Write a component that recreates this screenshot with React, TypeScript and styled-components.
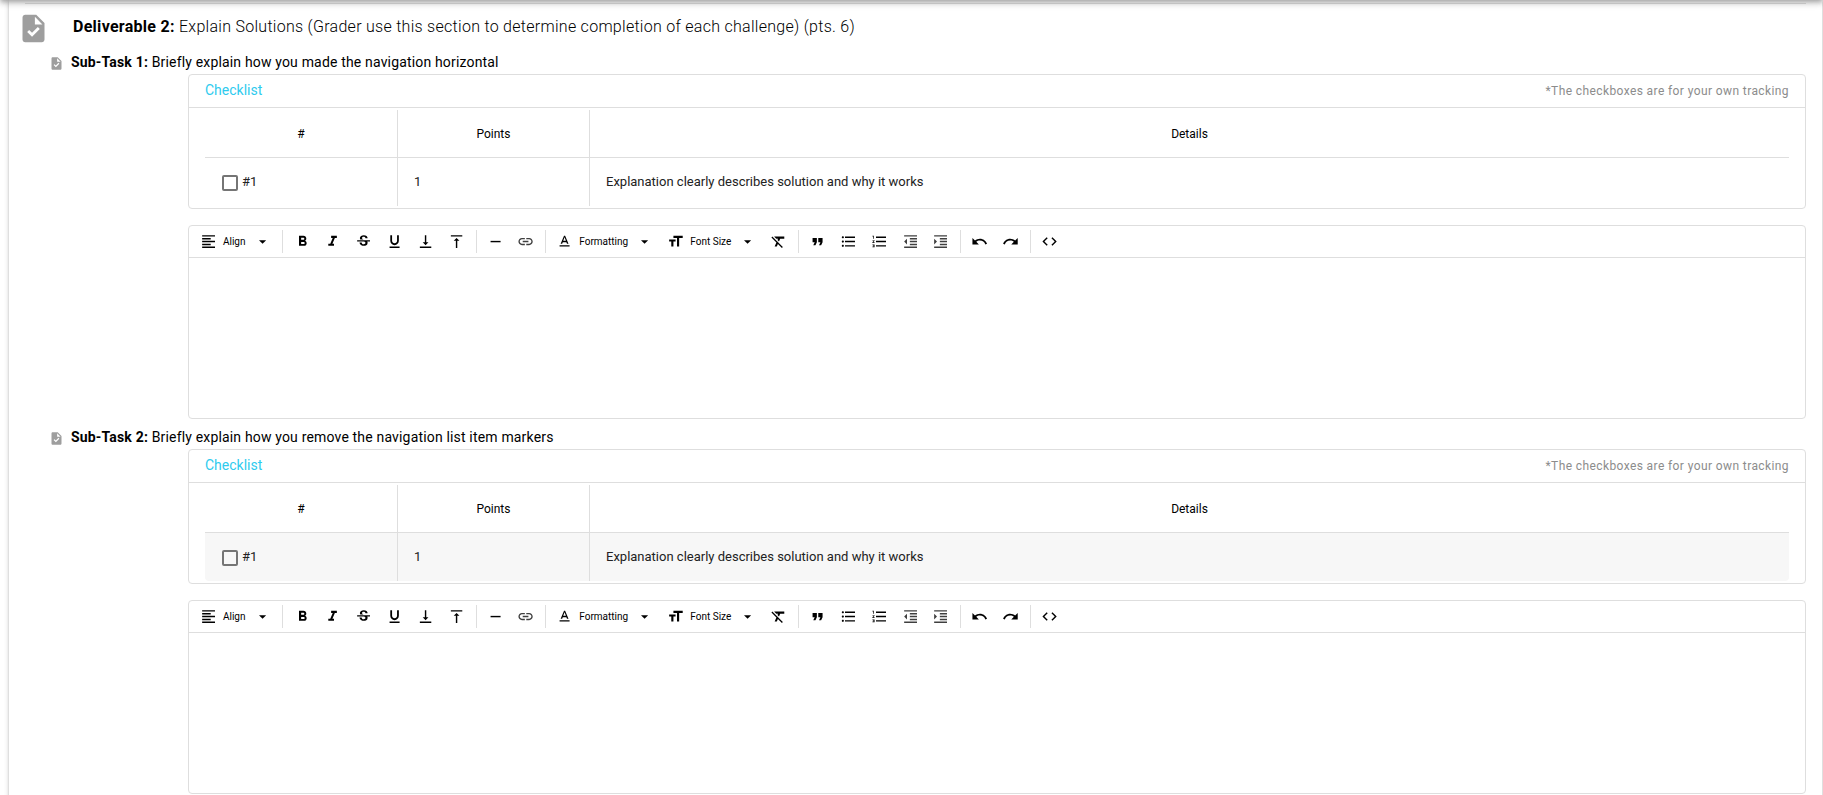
import React from 'react';
import styled, { createGlobalStyle } from 'styled-components';
import type { IconType } from 'react-icons';
import {
  MdTask, MdFormatAlignLeft, MdArrowDropDown, MdFormatBold, MdFormatItalic, MdStrikethroughS,
  MdFormatUnderlined, MdVerticalAlignBottom, MdVerticalAlignTop, MdRemove, MdLink, MdTextFormat,
  MdFormatSize, MdFormatClear, MdFormatQuote, MdFormatListBulleted, MdFormatListNumbered,
  MdFormatIndentDecrease, MdFormatIndentIncrease, MdUndo, MdRedo, MdCode,
} from 'react-icons/md';

const line = '#dedede';

const GlobalStyle = createGlobalStyle`
  *, *::before, *::after { box-sizing: border-box; }
  html, body { margin: 0; height: 100%; overflow: hidden; }
  body {
    background: #fff;
    color: #000;
    font-family: Roboto, "Liberation Sans", sans-serif;
    font-size: 14px;
    line-height: 1.5;
  }
`;

const Page = styled.div`
  position: relative;
  height: 795px;
  padding: 0 1px 0 9px;
  overflow: hidden;
`;

const AppBarShadow = styled.div`
  position: absolute;
  left: 0;
  right: 0;
  top: -50px;
  height: 50px;
  box-shadow: 0 2px 4px -1px rgba(0, 0, 0, 0.2), 0 4px 5px rgba(0, 0, 0, 0.14), 0 1px 10px rgba(0, 0, 0, 0.12);
`;

const Sheet = styled.main`
  height: 860px;
  padding: 3px 16px 0;
  box-shadow: 0 1px 5px rgba(0, 0, 0, 0.2), 0 2px 2px rgba(0, 0, 0, 0.14), 0 3px 1px -2px rgba(0, 0, 0, 0.12);
`;

const Divider = styled.hr`
  height: 1px;
  margin: 0;
  border: 0;
  background: rgba(0, 0, 0, 0.12);
`;

const Deliverable = styled.header`
  display: flex;
  align-items: center;
  height: 46px;
  margin-left: -8px;
`;

const DeliverableIcon = styled(MdTask)`
  width: 33px;
  height: 33px;
  margin-top: 2px;
  color: #9e9e9e;
`;

const DeliverableTitle = styled.h1`
  margin: 0 0 0 23px;
  padding-bottom: 1px;
  font-size: 16px;
  font-weight: 300;
  letter-spacing: 0.28px;
  line-height: 24px;
  b { font-weight: 700; }
`;

const SubTask = styled.section`
  height: 375px;
`;

const SubTaskHead = styled.div`
  display: flex;
  align-items: center;
  height: 24px;
  padding-left: 23.5px;
`;

const SubTaskIcon = styled(MdTask)`
  width: 15px;
  height: 15px;
  margin-top: 2px;
  color: #9e9e9e;
`;

const SubTaskTitle = styled.h2`
  margin: 0 0 0 7.5px;
  font-size: 14px;
  font-weight: 400;
  letter-spacing: 0.17px;
  line-height: 20px;
`;

const Bordered = styled.div`
  margin-left: 163px;
  border: 1px solid ${line};
  border-radius: 4px;
`;

const Checklist = styled(Bordered)`
  height: 135px;
`;

const ChecklistHead = styled.div`
  display: flex;
  justify-content: space-between;
  align-items: center;
  height: 33px;
  padding: 0 16px 2px;
  border-bottom: 1px solid ${line};
`;

const ChecklistTitle = styled.span`
  color: #2fcbee;
  font-size: 14px;
`;

const Note = styled.span`
  padding-top: 2px;
  color: #8c8c8c;
  font-size: 12px;
  letter-spacing: 0.4px;
`;

const Grid = styled.div`
  padding: 2px 16px;
`;

const Row = styled.div<{ $hovered?: boolean }>`
  display: grid;
  grid-template-columns: 192px 192px 1fr;
  height: 48px;
  border-radius: 0 0 4px 4px;
  background: ${(p) => (p.$hovered ? '#f7f7f7' : 'transparent')};
`;

const HeadRow = styled(Row)`
  border-bottom: 1px solid ${line};
  border-radius: 0;
`;

const Cell = styled.div`
  display: flex;
  align-items: center;
  padding: 0 16px 1px;
  color: #222;
  font-size: 13px;
  & + & { border-left: 1px solid ${line}; }
`;

const HeadCell = styled(Cell)`
  justify-content: center;
  padding-bottom: 0;
  color: #000;
  font-size: 12px;
`;

const Checkbox = styled.span`
  width: 16px;
  height: 16px;
  margin: 3px 4px 0 1px;
  border: 2px solid #757575;
  border-radius: 2px;
`;

const Editor = styled(Bordered)`
  height: 194px;
  margin-top: 16px;
`;

const Toolbar = styled.div`
  display: flex;
  height: 32px;
  padding: 4px 0;
  border-bottom: 1px solid ${line};
`;

const Group = styled.div`
  position: relative;
  display: flex;
  padding: 0 4px;
  & + &::before {
    content: '';
    position: absolute;
    left: 0;
    top: 0;
    width: 1px;
    height: 23px;
    background: ${line};
  }
  &:nth-child(2) { padding-left: 5px; }
`;

const ToolButton = styled.button`
  display: flex;
  align-items: center;
  height: 23px;
  margin: 0 4px;
  padding: 0 2.85px;
  border: 0;
  background: none;
  color: #000;
  font-family: inherit;
  font-size: 10px;
  svg { width: 17.15px; height: 17.15px; flex: none; }
`;

const ToolLabel = styled.span`
  margin: 0 8.2px 0 6px;
  white-space: nowrap;
`;

type Tool = { icon: IconType; name: string; label?: string };

const groups: Tool[][] = [
  [{ icon: MdFormatAlignLeft, name: 'align', label: 'Align' }],
  [
    { icon: MdFormatBold, name: 'bold' },
    { icon: MdFormatItalic, name: 'italic' },
    { icon: MdStrikethroughS, name: 'strike' },
    { icon: MdFormatUnderlined, name: 'underline' },
    { icon: MdVerticalAlignBottom, name: 'subscript' },
    { icon: MdVerticalAlignTop, name: 'superscript' },
  ],
  [{ icon: MdRemove, name: 'hr' }, { icon: MdLink, name: 'link' }],
  [
    { icon: MdTextFormat, name: 'formatting', label: 'Formatting' },
    { icon: MdFormatSize, name: 'size', label: 'Font Size' },
    { icon: MdFormatClear, name: 'clear' },
  ],
  [
    { icon: MdFormatQuote, name: 'quote' },
    { icon: MdFormatListBulleted, name: 'bullets' },
    { icon: MdFormatListNumbered, name: 'numbers' },
    { icon: MdFormatIndentDecrease, name: 'outdent' },
    { icon: MdFormatIndentIncrease, name: 'indent' },
  ],
  [{ icon: MdUndo, name: 'undo' }, { icon: MdRedo, name: 'redo' }],
  [{ icon: MdCode, name: 'source' }],
];

const softIcons = ['link', 'outdent', 'indent'];

function EditorToolbar() {
  return (
    <Toolbar>
      {groups.map((tools, i) => (
        <Group key={i}>
          {tools.map(({ icon: Icon, name, label }) => (
            <ToolButton key={name} type="button">
              <Icon opacity={softIcons.includes(name) ? 0.75 : 1} />
              {label && <ToolLabel>{label}</ToolLabel>}
              {label && <MdArrowDropDown />}
            </ToolButton>
          ))}
        </Group>
      ))}
    </Toolbar>
  );
}

function SubTaskSection({ number, text, hovered }: { number: number; text: string; hovered?: boolean }) {
  return (
    <SubTask>
      <SubTaskHead>
        <SubTaskIcon />
        <SubTaskTitle><b>Sub-Task {number}:</b> {text}</SubTaskTitle>
      </SubTaskHead>
      <Checklist>
        <ChecklistHead>
          <ChecklistTitle>Checklist</ChecklistTitle>
          <Note>*The checkboxes are for your own tracking</Note>
        </ChecklistHead>
        <Grid>
          <HeadRow>
            <HeadCell>#</HeadCell>
            <HeadCell>Points</HeadCell>
            <HeadCell>Details</HeadCell>
          </HeadRow>
          <Row $hovered={hovered}>
            <Cell><Checkbox />#1</Cell>
            <Cell>1</Cell>
            <Cell>Explanation clearly describes solution and why it works</Cell>
          </Row>
        </Grid>
      </Checklist>
      <Editor>
        <EditorToolbar />
      </Editor>
    </SubTask>
  );
}

export default function App() {
  return (
    <>
      <GlobalStyle />
      <Page>
        <Sheet>
          <Divider />
          <Deliverable>
            <DeliverableIcon />
            <DeliverableTitle>
              <b>Deliverable 2:</b> Explain Solutions (Grader use this section to determine completion of each challenge) (pts. 6)
            </DeliverableTitle>
          </Deliverable>
          <SubTaskSection number={1} text="Briefly explain how you made the navigation horizontal" />
          <SubTaskSection number={2} text="Briefly explain how you remove the navigation list item markers" hovered />
        </Sheet>
        <AppBarShadow />
      </Page>
    </>
  );
}
